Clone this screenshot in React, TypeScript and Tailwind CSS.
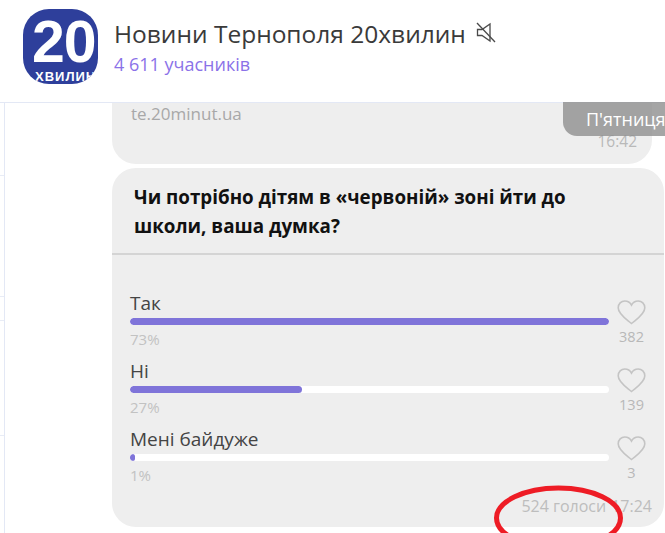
const font = { fontFamily: '"Open Sans", "Noto Sans", sans-serif' }
const logoFont = { fontFamily: '"Liberation Sans", sans-serif' }

const options = [
  { label: 'Так', percent: 73, bar: 100, likes: 382 },
  { label: 'Ні', percent: 27, bar: 36, likes: 139 },
  { label: 'Мені байдуже', percent: 1, bar: 1, likes: 3 },
]

function Heart() {
  return (
    <svg width="29" height="25" viewBox="0 0 29 25" fill="none" stroke="#c4c4c4" strokeWidth="1.6">
      <path d="M14.5 23.5 C10 19.5 1.2 14.5 1.2 7.8 C1.2 3.8 4.2 1 7.8 1 C10.6 1 13.2 2.6 14.5 5 C15.8 2.6 18.4 1 21.2 1 C24.8 1 27.8 3.8 27.8 7.8 C27.8 14.5 19 19.5 14.5 23.5 Z" />
    </svg>
  )
}

function MutedIcon() {
  return (
    <svg width="20" height="21" viewBox="0 0 20 21" fill="none" stroke="#4a4a4a" strokeWidth="1.3" className="ml-[10px] mt-[-4px]">
      <path d="M1.5 7.5 H6 L14 2 V19 L6 13.5 H1.5 Z" />
      <path d="M1 1 L19 20" />
    </svg>
  )
}

export default function App() {
  return (
    <div style={font} className="relative w-[665px] h-[533px] overflow-hidden bg-white flex flex-col">
      {/* Channel header */}
      <div className="h-[103px] shrink-0 border-b border-[#e3e8f5] flex items-start pl-[23px] pt-[9px]">
        <div style={logoFont} className="w-[75px] h-[75px] rounded-[26px] bg-[#2e3f9b] overflow-hidden flex flex-col text-white">
          <span className="text-[59px] leading-[50px] font-bold tracking-[-1px] mt-[8px] pl-[9px]">20</span>
          <span className="text-[13px] leading-[14px] font-bold tracking-[1px] whitespace-nowrap mt-[3px] pl-[12px]">ХВИЛИН</span>
        </div>
        <div className="ml-[16px] mt-[8px]">
          <div className="flex items-center text-[#3a3a3a] text-[24.5px] leading-[34px] whitespace-nowrap">
            Новини Тернополя 20хвилин
            <MutedIcon />
          </div>
          <div className="text-[#8b72e8] text-[18px] leading-[24px] mt-[1px]">4 611 учасників</div>
        </div>
      </div>

      {/* Messages */}
      <div className="flex-1 flex min-h-0">
        <div className="w-[5px] shrink-0 border-r border-[#e3e8f5] flex flex-col">
          <div className="h-[73px] border-b border-[#e8ecf6]" />
          <div className="h-[121px] border-b border-[#e8ecf6]" />
          <div className="h-[24px] border-b border-[#e8ecf6]" />
          <div className="h-[115px] border-b border-[#e8ecf6]" />
        </div>
        <div className="flex-1 pl-[107px] flex flex-col gap-[4px]">
          <div className="relative h-[61px] w-[540px] bg-[#eeeeee] rounded-b-[24px] pl-[19px] text-[#a8a8a8]">
            <div className="text-[17px] leading-[22px]">te.20minut.ua</div>
            <div className="absolute right-[15px] top-[27px] text-[15.5px] leading-[22px] text-[#b9b9b9]">16:42</div>
          </div>
          <div className="relative h-[359px] w-[552px] bg-[#eeeeee] rounded-[24px]">
            <div className="h-[87px] border-b-2 border-[#d4d4d4] pl-[22px] pt-[15px] text-[18.8px] leading-[29px] font-bold text-[#111111] whitespace-nowrap">
              Чи потрібно дітям в «червоній» зоні йти до
              <br />
              школи, ваша думка?
            </div>
            <div className="pl-[18px] pr-[19px] pt-[36px] flex flex-col gap-[6px]">
              {options.map((o) => (
                <div key={o.label} className="flex h-[62px]">
                  <div className="w-[479px]">
                    <div className="text-[19px] leading-[24px] text-[#444444]">{o.label}</div>
                    <div className="h-[7px] mt-[3px] rounded-full bg-white overflow-hidden">
                      <div className="h-full rounded-full bg-[#7f74d9]" style={{ width: `${o.bar}%`, minWidth: 5 }} />
                    </div>
                    <div className="text-[15px] leading-[20px] mt-[4px] text-[#c2c2c2]">{o.percent}%</div>
                  </div>
                  <div className="ml-[9px] w-[27px] flex flex-col items-center pt-[9px]">
                    <Heart />
                    <div className="text-[14.5px] leading-[18px] text-[#b8b8b8] mt-[3px]">{o.likes}</div>
                  </div>
                </div>
              ))}
            </div>
            <div className="absolute right-[12px] bottom-[11px] flex text-[16px] leading-[20px] text-[#bdbdbd] gap-[5px]">
              <span>524 голоси</span>
              <span>17:24</span>
            </div>
          </div>
        </div>
      </div>

      {/* Date badge over the feed */}
      <div className="absolute left-[563px] top-[102px] w-[130px] h-[34px] rounded-bl-[14px] bg-[#8e8e8e]/80 text-white text-[18px] leading-[34px] pl-[23px] whitespace-nowrap">
        П'ятниця
      </div>

      {/* Red annotation */}
      <svg className="absolute left-[490px] top-[482px]" width="140" height="51" viewBox="0 0 140 51" fill="none">
        <ellipse cx="68.5" cy="36" rx="62" ry="30" stroke="#ee1c25" strokeWidth="5" />
      </svg>
    </div>
  )
}
